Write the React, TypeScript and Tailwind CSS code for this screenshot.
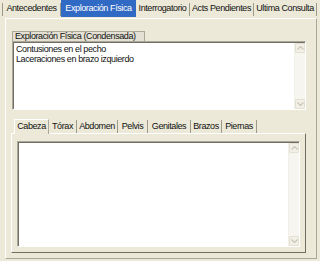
import React from "react";

const font = { fontFamily: '"Liberation Sans", Arial, sans-serif' };

function Scrollbar({ h }: { h: number }) {
  return (
    <div className="flex flex-col w-[11px] bg-[#f6f5f0] border-l border-[#f0efe8]" style={{ height: h }}>
      <div className="h-[10px] w-[10px] flex items-center justify-center bg-[#f1efe6] border border-[#e3e0d4] rounded-[1px]">
        <svg width="7" height="4" viewBox="0 0 7 4"><path d="M0.5 3.5 L3.5 0.5 L6.5 3.5" fill="none" stroke="#c9c6b6" strokeWidth="1.2" /></svg>
      </div>
      <div className="flex-1" />
      <div className="h-[10px] w-[10px] flex items-center justify-center bg-[#f1efe6] border border-[#e3e0d4] rounded-[1px]">
        <svg width="7" height="4" viewBox="0 0 7 4"><path d="M0.5 0.5 L3.5 3.5 L6.5 0.5" fill="none" stroke="#c9c6b6" strokeWidth="1.2" /></svg>
      </div>
    </div>
  );
}

const topTabs = [
  { label: "Antecedentes", w: 58 },
  { label: "Exploración Física", w: 75, sel: true },
  { label: "Interrogatorio", w: 54 },
  { label: "Acts Pendientes", w: 64 },
  { label: "Ultima Consulta", w: 63 },
];

const subTabs = [
  { label: "Tórax", w: 28 },
  { label: "Abdomen", w: 41 },
  { label: "Pelvis", w: 30 },
  { label: "Genitales", w: 43 },
  { label: "Brazos", w: 31 },
  { label: "Piernas", w: 35 },
];

export default function App() {
  return (
    <div className="w-[320px] h-[261px] bg-[#ece9d8] text-[9px] tracking-[-0.4px] text-[#111] flex flex-col overflow-hidden whitespace-nowrap" style={font}>
      {/* top tabs */}
      <div className="flex h-[18px] pl-[2px] items-stretch">
        <div className="w-px bg-[#9d9a8c] mt-[3px] mb-[2px]" />
        {topTabs.map((t) =>
          t.sel ? (
            <div key={t.label} className="flex items-center justify-center bg-[#316ac5] text-white mb-[1px]" style={{ width: t.w }}>
              {t.label}
            </div>
          ) : (
            <div key={t.label} className="flex items-stretch" style={{ width: t.w }}>
              <div className="flex-1 flex items-center justify-center pb-[1px]">{t.label}</div>
              <div className="w-px bg-[#9d9a8c] mt-[3px] mb-[2px]" />
            </div>
          )
        )}
      </div>

      {/* main panel */}
      <div className="ml-[5px] w-[312px] h-[241px] border border-t-white border-l-white border-r-[#aca899] border-b-[#aca899] flex flex-col">
        <div className="ml-[6px] mt-[12px] w-[133px] h-[10px] flex items-center pl-[2px] bg-[#e4e1d4] border-t border-l border-r border-[#aca899] leading-none">
          Exploración Física (Condensada)
        </div>
        <div className="ml-[6px] w-[294px] h-[69px] border border-t-[#aca899] border-l-[#aca899] border-r-white border-b-white">
          <div className="w-full h-full bg-white border-t border-l border-[#716f64] flex">
            <div className="flex-1 pl-[2px] pt-[1px] leading-[10px]">
              <div>Contusiones en el pecho</div>
              <div>Laceraciones en brazo izquierdo</div>
            </div>
            <Scrollbar h={66} />
          </div>
        </div>

        {/* sub tabs */}
        <div className="ml-[8px] mt-[8px] flex h-[15px] items-stretch">
          <div className="w-[35px] flex items-center justify-center border-t border-l border-white border-r border-r-[#aca899] bg-[#ece9d8] relative top-px z-10">
            Cabeza
          </div>
          {subTabs.map((t) => (
            <div key={t.label} className="flex items-stretch" style={{ width: t.w }}>
              <div className="flex-1 flex items-center justify-center pt-[2px]">{t.label}</div>
              <div className="w-px bg-[#9d9a8c] mt-[2px]" />
            </div>
          ))}
        </div>
        <div className="ml-[5px] w-[295px] h-[120px] border border-t-white border-l-white border-r-[#716f64] border-b-[#716f64] flex flex-col">
          <div className="ml-[5px] mt-[7px] w-[283px] h-[106px] border border-t-[#aca899] border-l-[#aca899] border-r-white border-b-white">
            <div className="w-full h-full bg-white border-t border-l border-[#716f64] flex justify-end">
              <Scrollbar h={103} />
            </div>
          </div>
        </div>
      </div>
    </div>
  );
}
